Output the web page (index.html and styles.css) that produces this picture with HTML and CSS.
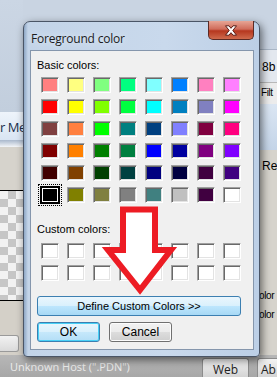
FILE: index.html
```html
<!DOCTYPE html>
<html lang="en">
<head>
  <meta charset="UTF-8" />
  <title>Foreground color</title>
  <link rel="stylesheet" href="styles.css">
</head>
<body>
  <div class="desktop">
    <div class="app">
      <div class="app-main">
        <div class="pane-left">
          <div class="pl-top"></div>
          <div class="pl-tab">r Me</div>
          <div class="pl-sep"></div>
          <div class="pl-gray"></div>
          <div class="pl-canvas"></div>
          <div class="pl-bottom"><div class="pl-btn"></div></div>
        </div>
        <div class="pane-mid"></div>
        <div class="pane-right">
          <div class="pr-top"></div>
          <div class="pr-box">8b</div>
          <div class="pr-filter">Filt</div>
          <div class="pr-band"></div>
          <div class="pr-gray">
            <div class="pr-re">Re</div>
            <div class="pr-olor">olor</div>
            <div class="pr-olor">olor</div>
          </div>
        </div>
      </div>
      <div class="statusbar">
        <span class="sb-text">Unknown Host (".PDN")</span>
        <div class="sb-btns">
          <span class="sb-btn">Web</span>
          <span class="sb-btn sb-btn-cut">Ab</span>
        </div>
      </div>
    </div>

    <div class="dialog">
      <div class="titlebar">
        <span class="title">Foreground color</span>
        <div class="close-btn">
          <svg width="14" height="11" viewBox="0 0 14 11">
            <path d="M1.5 0.8 L5 0.8 L7 3.3 L9 0.8 L12.5 0.8 L8.8 5.5 L12.5 10.2 L9 10.2 L7 7.7 L5 10.2 L1.5 10.2 L5.2 5.5 Z" fill="#fff" stroke="#5a1d16" stroke-width="1" stroke-linejoin="round"/>
          </svg>
        </div>
      </div>
      <div class="client">
        <div class="label label-basic">Basic colors:</div>
        <div class="swatches" id="basic"></div>
        <div class="label label-custom">Custom colors:</div>
        <div class="swatches custom" id="custom"></div>
        <button class="btn btn-define" type="button">Define Custom Colors &gt;&gt;</button>
        <div class="btn-row">
          <button class="btn btn-ok" type="button">OK</button>
          <button class="btn btn-cancel" type="button">Cancel</button>
        </div>
      </div>
    </div>

    <svg class="arrow" width="277" height="377" viewBox="0 0 277 377">
      <polygon points="123,209.5 155,209.5 155,250 171,250 140,290 108,250 123,250" fill="#fff" stroke="#ed1c24" stroke-width="6" stroke-linejoin="miter"/>
    </svg>
  </div>

  <script>
    const basicColors = [
      '#ff8080', '#ffff80', '#80ff80', '#00ff80', '#80ffff', '#0080ff', '#ff80c0', '#ff80ff',
      '#ff0000', '#ffff00', '#80ff00', '#00ff40', '#00ffff', '#0080c0', '#8080c0', '#ff00ff',
      '#804040', '#ff8040', '#00ff00', '#008080', '#004080', '#8080ff', '#800040', '#ff0080',
      '#800000', '#ff8000', '#008000', '#008040', '#0000ff', '#0000a0', '#800080', '#8000ff',
      '#400000', '#804000', '#004000', '#004040', '#000080', '#000040', '#400040', '#400080',
      '#000000', '#808000', '#808040', '#808080', '#408080', '#c0c0c0', '#400040', '#ffffff'
    ];

    function buildSwatches() {
      const basic = document.getElementById('basic');
      basicColors.forEach((color, index) => {
        const cell = document.createElement('div');
        cell.className = 'swatch' + (index === 40 ? ' selected' : '');
        cell.style.background = color;
        basic.appendChild(cell);
      });

      const custom = document.getElementById('custom');
      for (let i = 0; i < 16; i++) {
        const cell = document.createElement('div');
        cell.className = 'swatch';
        custom.appendChild(cell);
      }
    }

    buildSwatches();
  </script>
</body>
</html>
```

FILE: styles.css
```css
body {
  margin: 0;
  padding: 0;
  font-family: "Liberation Sans", Arial, sans-serif;
  font-size: 11px;
}

.desktop {
  position: relative;
  width: 277px;
  height: 377px;
  overflow: hidden;
  background: #c9d4e2;
}

/* background application */
.app {
  display: flex;
  flex-direction: column;
  height: 100%;
}

.app-main {
  flex: 1;
  display: flex;
}

.pane-left {
  width: 23px;
  display: flex;
  flex-direction: column;
}

.pl-top {
  height: 112px;
  background: linear-gradient(#cbd6e4, #c2cedd);
}

.pl-tab {
  height: 28px;
  box-sizing: border-box;
  padding-top: 6px;
  background: linear-gradient(#eef4fb, #d9e5f3);
  font-family: "Open Sans", sans-serif;
  font-size: 13px;
  letter-spacing: -0.5px;
  color: #1b2f4d;
  white-space: nowrap;
}

.pl-sep {
  height: 7px;
  background: linear-gradient(#a9b8cc, #f4f6f9);
}

.pl-gray {
  height: 43px;
  background: #d6d3cc;
}

.pl-canvas {
  height: 111px;
  box-sizing: border-box;
  border-top: 1px solid #000;
  border-bottom: 1px solid #000;
  background-color: #f2f2f2;
  background-image:
    linear-gradient(45deg, #c6c6c6 25%, transparent 25%, transparent 75%, #c6c6c6 75%),
    linear-gradient(45deg, #c6c6c6 25%, transparent 25%, transparent 75%, #c6c6c6 75%);
  background-size: 16px 16px;
  background-position: 0 0, 8px 8px;
}

.pl-bottom {
  flex: 1;
  background: #d4d0c8;
  display: flex;
  flex-direction: column;
  justify-content: flex-end;
  padding-bottom: 3px;
}

.pl-btn {
  width: 18px;
  height: 15px;
  border-radius: 0 3px 3px 0;
  border: 1px solid #9a9a9a;
  border-left: none;
  background: linear-gradient(#f2f2f2, #dadada);
}

.pane-mid {
  flex: 1;
}

.pane-right {
  width: 19px;
  display: flex;
  flex-direction: column;
  white-space: nowrap;
  font-size: 12px;
  color: #000;
}

.pr-top {
  height: 49px;
}

.pr-box {
  height: 33px;
  box-sizing: border-box;
  padding: 10px 0 0 4px;
  border-top: 1px solid #a9b6c6;
  background: #e3e8ef;
}

.pr-filter {
  height: 22px;
  box-sizing: border-box;
  padding: 4px 0 0 3px;
  border-top: 1px solid #b8b8b8;
  background: #ececec;
  font-size: 10px;
  letter-spacing: -0.4px;
}

.pr-band {
  height: 46px;
  background: linear-gradient(#dbe6f3, #c4d4e8);
}

.pr-gray {
  flex: 1;
  background: #d6d3cc;
  padding-left: 4px;
}

.pr-re {
  margin-top: 9px;
  margin-bottom: 117px;
}

.pr-olor {
  height: 19px;
  margin-left: -3px;
  font-size: 10px;
  letter-spacing: -0.4px;
}

.statusbar {
  height: 22px;
  display: flex;
  align-items: flex-end;
  background: linear-gradient(#b7b7b7, #a7a7a7);
}

.sb-text {
  flex: 1;
  padding: 0 0 3px 10px;
  font-family: "Open Sans", sans-serif;
  font-size: 11px;
  color: #ececec;
}

.sb-btns {
  display: flex;
  gap: 8px;
}

.sb-btn {
  width: 47px;
  height: 19px;
  box-sizing: border-box;
  padding-top: 2px;
  text-align: center;
  border: 1px solid #8c8c8c;
  border-bottom: none;
  border-radius: 3px 3px 0 0;
  background: linear-gradient(#f3f3f3, #d4d4d4);
  font-family: "Open Sans", sans-serif;
  font-size: 12px;
  color: #222;
}

.sb-btn-cut {
  width: 20px;
  text-align: left;
  padding-left: 3px;
  border-right: none;
  border-radius: 3px 0 0 0;
}

/* dialog window */
.dialog {
  position: absolute;
  left: 23px;
  top: 21px;
  width: 237px;
  height: 336px;
  box-sizing: border-box;
  border: 1px solid #4a5566;
  border-radius: 7px 7px 4px 4px;
  background: linear-gradient(90deg, #8ea7c5 0, #c3d4e8 4px, #c9d9ec 60%, #bccfe6 100%);
  box-shadow: 2px 3px 9px rgba(0, 0, 0, 0.55);
  display: flex;
  flex-direction: column;
}

.titlebar {
  height: 28px;
  display: flex;
  align-items: flex-start;
}

.title {
  padding: 8px 0 0 7px;
  font-family: "Open Sans", sans-serif;
  font-size: 12px;
  letter-spacing: -0.2px;
  color: #1c1c1c;
  text-shadow: 0 0 6px #e8f0f8;
}

.close-btn {
  margin: -1px 5px 0 auto;
  width: 46px;
  height: 19px;
  box-sizing: border-box;
  border: 1px solid #5b2a24;
  border-top: none;
  border-radius: 0 0 5px 5px;
  background: linear-gradient(#e7a595, #d06c5a 45%, #b6371f 55%, #cf6a4c);
  display: flex;
  align-items: center;
  justify-content: center;
}

.client {
  flex: 1;
  margin: 0 5px 6px 6px;
  border: 1px solid #8596ac;
  background: #f0f0f0;
  color: #000;
}

.label {
  height: 13px;
  line-height: 13px;
  margin-left: 6px;
}

.label-basic {
  margin-top: 8px;
}

.label-custom {
  margin-top: 20px;
}

.swatches {
  display: grid;
  grid-template-columns: repeat(8, 18px);
  grid-auto-rows: 16px;
  column-gap: 8px;
  row-gap: 6px;
  margin: 5px 0 0 10px;
}

.swatches.custom {
  margin-top: 7px;
}

.swatch {
  box-sizing: border-box;
  border: 1px solid;
  border-color: #a0a0a0 #fff #fff #a0a0a0;
  box-shadow: inset 1px 1px 0 #696969, inset -1px -1px 0 #e3e3e3;
  background: #fff;
}

.swatch.selected {
  border-color: #000;
  box-shadow: 0 0 0 1px #000, inset 0 0 0 1px #fff;
  outline: 1px dotted #000;
  outline-offset: 2px;
}

.btn {
  display: block;
  height: 20px;
  padding: 0;
  box-sizing: border-box;
  border-radius: 3px;
  font-family: "Liberation Sans", Arial, sans-serif;
  font-size: 11px;
  color: #000;
}

.btn-define {
  width: 204px;
  margin: 15px 0 0 6px;
  border: 1px solid #3c7fb1;
  background: linear-gradient(#eaf6fd, #d9f0fc 50%, #bee6fd 50%, #a7d9f5);
}

.btn-row {
  display: flex;
  gap: 9px;
  margin: 6px 0 0 6px;
}

.btn-ok {
  width: 63px;
  border: 1px solid #3c7fb1;
  box-shadow: inset 0 0 0 1px #48d0f6;
  background: linear-gradient(#eaf6fd, #d9f0fc 50%, #c6e8fb 50%, #b3def6);
  font-size: 12px;
}

.btn-cancel {
  width: 63px;
  border: 1px solid #707070;
  box-shadow: inset 0 0 0 1px #fcfcfc;
  background: linear-gradient(#f2f2f2, #ebebeb 50%, #dddddd 50%, #cfcfcf);
  font-size: 12px;
}

/* red annotation arrow */
.arrow {
  position: absolute;
  left: 0;
  top: 0;
}
```
